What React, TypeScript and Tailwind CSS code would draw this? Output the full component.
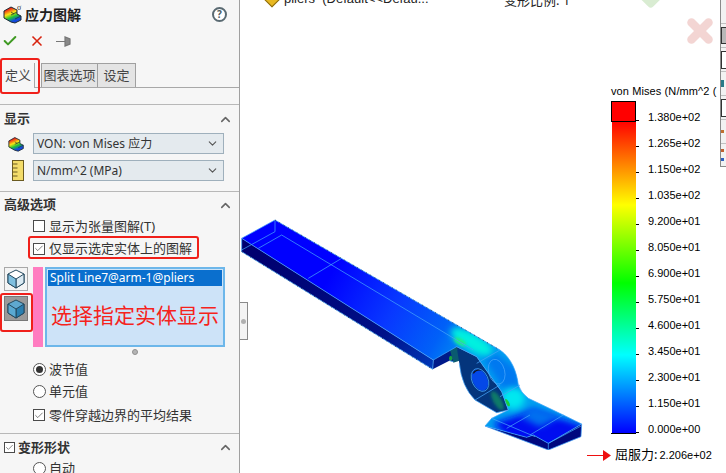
import React from 'react';
import { Check, ChevronDown, ChevronUp, X } from 'lucide-react';

const CJK = "font-['Noto_Sans','Noto_Sans_CJK_SC',sans-serif]";

const legendValues = [
  '1.380e+02', '1.265e+02', '1.150e+02', '1.035e+02', '9.200e+01', '8.050e+01', '6.900e+01',
  '5.750e+01', '4.600e+01', '3.450e+01', '2.300e+01', '1.150e+01', '0.000e+00',
];

// outline of the top surface, shared by the fill and the clip
const TOP_FACE =
  'M5 85 105 30 780 420C815 445 830 485 835 525Q842 548 865 565L970 615 1025 642 925 700 880 675 860 682 735 648 755 625 805 600 785 545 710 440 650 410 580 450z';

const StressIcon = ({ size = 20, sigma = false }: { size?: number; sigma?: boolean }) => (
  <svg width={size} height={size} viewBox="0 0 20 20">
    <defs>
      <linearGradient id="rb" x1="0.1" y1="0.1" x2="0.5" y2="1">
        <stop offset="0.1" stopColor="#ee2418" />
        <stop offset="0.4" stopColor="#fbe414" />
        <stop offset="0.65" stopColor="#1ec436" />
        <stop offset="0.9" stopColor="#1248e0" />
      </linearGradient>
    </defs>
    <path d="M1 7 8 3l6 3v4l4 2v4l-6 3-4-1-7-4z" fill="url(#rb)" stroke="#1c2a32" strokeWidth="1" strokeLinejoin="round" />
    <path d="M8 11l6-3M8 8l3 2M12 15l6-3" fill="none" stroke="#1c2a32" strokeWidth="0.7" />
    {sigma && <text x="14" y="6" fontSize="8" fill="#333" fontFamily="Liberation Serif, serif">σ</text>}
  </svg>
);

const BodyCube = ({ dark = false }: { dark?: boolean }) => (
  <svg width="18" height="20" viewBox="0 0 18 20">
    <path d="M9 1 17 5v9l-8 5-8-5V5z" fill={dark ? '#5fa8cf' : '#fff'} stroke="#24495e" strokeWidth="1" strokeLinejoin="round" />
    <path d="M9 10l8-5v9l-8 5z" fill={dark ? '#2a7fb0' : '#dbeaf2'} stroke="#24495e" strokeWidth="1" strokeLinejoin="round" />
    <path d="M1 5l8 5v9l-8-5z" fill={dark ? '#5aa9d2' : '#7fbfdf'} stroke="#24495e" strokeWidth="1" strokeLinejoin="round" />
  </svg>
);

const CheckBox = ({ checked = false, small = false }: { checked?: boolean; small?: boolean }) => (
  <span className={`flex items-center justify-center border border-[#4a4a4a] bg-white ${small ? 'w-[11px] h-[11px]' : 'w-[12px] h-[12px]'}`}>
    {checked && <Check size={11} strokeWidth={1.5} className="text-[#333]" />}
  </span>
);

const Radio = ({ on = false }: { on?: boolean }) => (
  <span className="flex items-center justify-center w-[13px] h-[13px] -mr-px rounded-full border border-[#555] bg-white">
    {on && <span className="w-[7px] h-[7px] rounded-full bg-[#333]" />}
  </span>
);

const SectionHead = ({ title }: { title: string }) => (
  <div className="flex items-center justify-between pl-[4px] pr-[6px] h-[26px]">
    <span className="text-[13px] font-bold text-[#333]">{title}</span>
    <ChevronUp size={15} strokeWidth={2.5} className="text-[#666]" />
  </div>
);

const SelectBox = ({ value }: { value: string }) => (
  <div className="flex items-center justify-between w-[191px] h-[21px] pl-[3px] pr-[4px] bg-[#e4eaee] border border-[#9fb0bc] text-[12px] text-[#333]">
    <span>{value}</span>
    <ChevronDown size={13} className="text-[#555]" />
  </div>
);

const OptionRow = ({ children, label, h = 22 }: { children: React.ReactNode; label: string; h?: number }) => (
  <div className="flex items-center gap-[4px] pl-[33px] text-[13px] leading-none text-[#333]" style={{ height: h }}>
    {children}
    <span>{label}</span>
  </div>
);

const PropertyPanel = () => (
  <div className={`relative w-[240px] h-[473px] shrink-0 overflow-hidden bg-[#f6f6f6] border-r border-[#a0a0a0] ${CJK}`}>
    <div className="flex items-center justify-between h-[28px] pl-[3px] pr-[12px]">
      <div className="flex items-center gap-[2px]">
        <StressIcon size={20} sigma />
        <span className="text-[14px] font-bold text-[#222]">应力图解</span>
      </div>
      <span className="flex items-center justify-center w-[15px] h-[15px] rounded-full border-2 border-[#5a6a72] text-[10px] font-bold text-[#4a5a62] bg-white">?</span>
    </div>

    <div className="flex items-center gap-[11px] h-[26px] pl-[2px]">
      <Check size={16} strokeWidth={3} className="text-[#3f9a22]" />
      <X size={16} strokeWidth={2.5} className="text-[#d8230f]" />
      <svg width="15" height="11" viewBox="0 0 15 11">
        <path d="M0 5.500h5M5 5.500h4M9 1v9l5-2V3z" fill="#888" stroke="#777" strokeWidth="1.200" />
      </svg>
    </div>

    <div className="flex items-end h-[34px] border-b border-[#a8a8a8] pl-[2px] text-[13px] text-[#444]">
      <div className="w-[33px] h-[25px] -mb-px bg-[#f6f6f6] border-r border-[#a8a8a8] flex items-center justify-center">定义</div>
      <div className="w-[57px] h-[24px] ml-[6px] bg-[#e4e4e4] border border-b-0 border-[#a0a0a0] flex items-center justify-center">图表选项</div>
      <div className="w-[38px] h-[24px] bg-[#e4e4e4] border border-l-0 border-b-0 border-[#a0a0a0] flex items-center justify-center">设定</div>
    </div>

    <div className="h-[17px] border-b border-[#b8b8b8]" />
    <div className="mt-[1px]"><SectionHead title="显示" /></div>

    <div className="flex items-center gap-[8px] pl-[8px] h-[21px] mt-[1px]">
      <StressIcon size={17} />
      <SelectBox value="VON: von Mises 应力" />
    </div>
    <div className="flex items-center gap-[8px] pl-[11px] h-[21px] mt-[6px]">
      <svg width="14" height="21" viewBox="0 0 14 21">
        <rect x="1.500" y="0.500" width="11" height="20" fill="#f3dc6a" stroke="#6a5a20" />
        <path d="M1.500 4h5M1.500 8h5M1.500 12h5M1.500 16h5" stroke="#6a5a20" fill="none" />
      </svg>
      <SelectBox value="N/mm^2 (MPa)" />
    </div>

    <div className="h-[11px] border-b border-[#b8b8b8]" />
    <SectionHead title="高级选项" />

    <div className="-mt-[3px]">
      <OptionRow label="显示为张量图解(T)" h={22}><CheckBox /></OptionRow>
      <OptionRow label="仅显示选定实体上的图解" h={23}><CheckBox checked /></OptionRow>
    </div>

    <div className="flex mt-[7px] h-[80px]">
      <div className="flex flex-col gap-[5px] pl-[4px] w-[33px]">
        <span className="flex items-center justify-center w-[24px] h-[24px] border border-[#a8a8a8] bg-[#f4f4f4]"><BodyCube /></span>
        <span className="flex items-center justify-center w-[24px] h-[25px] border border-[#777] bg-[#9a9a9a]"><BodyCube dark /></span>
      </div>
      <div className="w-[10px] bg-[#ff7cc0]" />
      <div className="w-[180px] ml-[2px] p-[2px] border border-[#6db7ea] bg-[#cde3f8] shadow-[inset_0_0_0_1px_#6db7ea]">
        <div className="h-[16px] px-[2px] flex items-center bg-[#0a6fce] text-[12px] text-white">Split Line7@arm-1@pliers</div>
        <div className="mt-[15px] text-center whitespace-nowrap text-[21px] leading-[28px] text-[#f5231d]">选择指定实体显示</div>
      </div>
    </div>

    <div className="flex justify-center h-[14px] pt-[2px] pl-[31px]">
      <span className="w-[6px] h-[6px] rounded-full bg-[#b4b4b4] border border-[#909090]" />
    </div>

    <div className="-mt-[3px]">
      <OptionRow label="波节值" h={22}><Radio on /></OptionRow>
      <OptionRow label="单元值" h={22}><Radio /></OptionRow>
    </div>
    <div className="mt-[1px]"><OptionRow label="零件穿越边界的平均结果" h={24}><CheckBox checked /></OptionRow></div>

    <div className="h-[7px] border-b border-[#b8b8b8]" />
    <div className="flex items-center justify-between pl-[4px] pr-[6px] h-[27px]">
      <div className="flex items-center gap-[3px]">
        <CheckBox checked small />
        <span className="text-[13px] font-bold text-[#333]">变形形状</span>
      </div>
      <ChevronUp size={15} strokeWidth={2.5} className="text-[#666]" />
    </div>
    <OptionRow label="自动" h={14}><Radio /></OptionRow>

    {/* red annotation frames */}
    <div className="absolute left-0 top-[58px] w-[40px] h-[36px] border-[2px] border-[#f0201a] rounded-[3px]" />
    <div className="absolute left-[28px] top-[236px] w-[171px] h-[23px] border-[2px] border-[#f0201a] rounded-[3px]" />
    <div className="absolute left-0 top-[293px] w-[33px] h-[39px] border-[2px] border-[#f0201a] rounded-[3px]" />
  </div>
);

const PliersModel = () => (
  <svg width="360" height="240" viewBox="0 0 1080 720">
    <defs>
      <filter id="soft" x="-40%" y="-40%" width="180%" height="180%"><feGaussianBlur stdDeviation="9" /></filter>
      <filter id="soft2" x="-60%" y="-60%" width="220%" height="220%"><feGaussianBlur stdDeviation="5" /></filter>
      <linearGradient id="side" gradientUnits="userSpaceOnUse" x1="100" y1="100" x2="578" y2="478">
        <stop offset="0" stopColor="#000070" />
        <stop offset="0.7" stopColor="#001088" />
        <stop offset="1" stopColor="#0038b8" />
      </linearGradient>
      <linearGradient id="topFill" gradientUnits="userSpaceOnUse" x1="100" y1="60" x2="720" y2="420">
        <stop offset="0" stopColor="#0000ff" />
        <stop offset="0.3" stopColor="#0000ff" />
        <stop offset="0.6" stopColor="#0838ff" />
        <stop offset="0.82" stopColor="#0060f8" />
        <stop offset="1" stopColor="#00a0f0" />
      </linearGradient>
      <clipPath id="topClip"><path d={TOP_FACE} /></clipPath>
    </defs>

    {/* long side and foot side */}
    <path d="M5 85V125L578 478 580 450z" fill="url(#side)" />
    <path d="M735 648 925 720 1023 680 1025 642 925 700 880 675 860 682z" fill="#00087e" />

    {/* cylinder cut and neck */}
    <path d="M580 450Q600 420 650 410L640 455 628 452 578 478z" fill="#001a8a" />
    <path d="M630 420 650 410 665 450 640 458z" fill="#0a5a70" />
    <path d="M650 410 710 440 785 545 805 600 770 608 705 570Q665 530 658 460z" fill="#04357c" />
    <ellipse cx="772" cy="572" rx="12" ry="32" transform="rotate(-30 772 572)" fill="#0e7a68" filter="url(#soft2)" />

    {/* top surface with hot spots */}
    <path d={TOP_FACE} fill="url(#topFill)" />
    <g clipPath="url(#topClip)">
      <path d="M760 425 835 480 840 540 790 540 730 445z" fill="#0078f0" filter="url(#soft)" />
      <path d="M760 640 880 600 1040 650 930 720 800 680z" fill="#0010f0" filter="url(#soft)" />
      <path d="M880 590 960 620 900 650 840 620z" fill="#0070f0" filter="url(#soft)" />
      <ellipse cx="695" cy="395" rx="70" ry="26" transform="rotate(30 695 395)" fill="#00f0e0" filter="url(#soft)" />
      <ellipse cx="660" cy="395" rx="20" ry="9" transform="rotate(30 660 395)" fill="#20f080" filter="url(#soft2)" />
      <ellipse cx="820" cy="565" rx="34" ry="32" fill="#00e8f0" filter="url(#soft)" />
    </g>
    <ellipse cx="802" cy="578" rx="5" ry="12" transform="rotate(-30 802 578)" fill="#18d040" />
    <ellipse cx="632" cy="445" rx="5" ry="8" fill="#18a040" />

    {/* through hole */}
    <ellipse cx="720" cy="510" rx="22" ry="34" transform="rotate(-25 720 510)" fill="#0448e8" />
    <path d="M700 490Q708 478 722 480" fill="none" stroke="#10151c" strokeWidth="4" />

    <g fill="none" stroke="#45a4fa" strokeWidth="2.200">
      <path d={TOP_FACE} />
      <path d="M1025 642 1023 680 925 720 735 648" />
      <path d="M5 85V125L578 478 580 450M105 30V65L5 120M125 75 55 115M125 75 700 420" />
      <path d="M205 205 305 145M640 455 628 452M658 460Q665 530 705 570L770 608 805 600" />
      <path d="M780 420 710 460M705 570 780 525M840 525 780 560" />
      <ellipse cx="770" cy="485" rx="24" ry="38" transform="rotate(-15 770 485)" />
      <ellipse cx="720" cy="510" rx="24" ry="36" transform="rotate(-25 720 510)" />
      <path d="M870 615 800 655M755 625 885 680M970 615 870 675M925 700 1023 648M925 700V720" />
    </g>
    <path d="M5 125 578 478M105 30 780 420" fill="none" stroke="#10151c" strokeWidth="2" strokeDasharray="3 12" />
  </svg>
);

const Legend = () => (
  <div className="absolute left-[371px] top-[85px] font-['Liberation_Sans',sans-serif] text-black">
    <div className="h-[16px] text-[11px] leading-[12px] whitespace-nowrap tracking-[0.1px]">von Mises (N/mm^2 (</div>
    <div className="flex">
      <div className="relative w-[25px] h-[333px] border-b border-black pl-px">
        <div className="w-[24px] h-full bg-[linear-gradient(to_bottom,#ff0000_0,#ff0000_20px,#ffff00_104px,#00ff00_182px,#00ffff_254px,#0000ff_332px)]" />
        <div className="absolute left-0 top-0 w-[25px] h-[21px] border border-black" />
      </div>
      <div className="flex flex-col -mt-[6px]">
        {legendValues.map((v) => (
          <div key={v} className="flex items-center h-[26px] pt-[18px]">
            <span className="self-end w-[3px] border-b border-black" />
            <span className="ml-[9px] text-[11px] leading-[8px]">{v}</span>
          </div>
        ))}
      </div>
    </div>
    <div className="flex items-center mt-[11px] -ml-[24px] h-[20px] whitespace-nowrap">
      <svg width="24" height="11" viewBox="0 0 24 11"><path d="M0 5.500h18" stroke="#ee1010" strokeWidth="1" /><path d="M16 0l8 5.500-8 5.500z" fill="#ee1010" /></svg>
      <span className={`ml-[4px] text-[13px] ${CJK}`}>屈服力:</span>
      <span className="ml-[2px] text-[11px]">2.206e+02</span>
    </div>
  </div>
);

const SideStrip = () => (
  <div className="absolute right-0 top-0 w-[6px] h-[167px] bg-[#f2f2f2] border-l border-b border-[#8a8a8a]">
    <div className="h-[24px] border-b border-[#c0c0c0]" />
    <div className="h-[24px] border-b border-[#c0c0c0] flex items-center"><span className="w-[5px] h-[17px] bg-[#b8b8b8] border border-r-0 border-[#333]" /></div>
    <div className="h-[24px] border-b border-[#c0c0c0] flex items-center"><span className="w-[5px] h-[18px] bg-white border border-r-0 border-[#333]" /></div>
    <div className="h-[24px] border-b border-[#c0c0c0] flex items-center"><span className="w-[3px] h-[7px] bg-[#2a7a88]" /></div>
    <div className="h-[24px] border-b border-[#c0c0c0] flex items-center"><span className="w-[5px] h-[18px] bg-white border border-r-0 border-[#333]" /></div>
    <div className="h-[24px] border-b border-[#c0c0c0] flex items-center"><span className="w-[3px] h-[3px] bg-[#c07030]" /></div>
    <div className="h-[22px] flex flex-col justify-center gap-[6px]"><span className="w-[3px] h-[3px] bg-[#c06030]" /><span className="w-[3px] h-[3px] bg-[#3060c0]" /></div>
  </div>
);

const GraphicsArea = () => (
  <div className="relative flex-1 h-[473px] overflow-hidden bg-white">
    {/* feature tree leftover, clipped at the top of the window */}
    <div className="absolute left-[26px] -top-[9px] flex items-center gap-[6px] h-[16px] font-['Liberation_Sans',sans-serif] text-[13px] text-[#222] whitespace-nowrap">
      <span className="w-[12px] h-[12px] rotate-45 bg-[#e8b820] border border-[#8a6a10]" />
      <span>pliers&nbsp; (Default&lt;&lt;Defau...</span>
    </div>
    <div className={`absolute left-[264px] -top-[9px] h-[16px] text-[13px] text-[#222] whitespace-nowrap ${CJK}`}>变形比例: 1</div>

    {/* accept / cancel ghost marks */}
    <Check size={34} strokeWidth={5} className="absolute left-[398px] -top-[20px] text-[#d9ecd2]" />
    <X size={34} strokeWidth={6} className="absolute left-[443px] top-[14px] text-[#f3d5d3]" />

    <div className="absolute left-0 top-[210px]"><PliersModel /></div>

    {/* panel collapse handle */}
    <div className="absolute left-0 top-[302px] w-[8px] h-[38px] bg-[#f4f4f4] border border-l-0 border-[#8a8a8a] flex items-center">
      <span className="ml-px w-[5px] h-[5px] rounded-full bg-[#b0b0b0]" />
    </div>

    <Legend />
    <SideStrip />
  </div>
);

export default function App() {
  return (
    <div className="flex w-[726px] h-[473px] overflow-hidden bg-white">
      <PropertyPanel />
      <GraphicsArea />
    </div>
  );
}
